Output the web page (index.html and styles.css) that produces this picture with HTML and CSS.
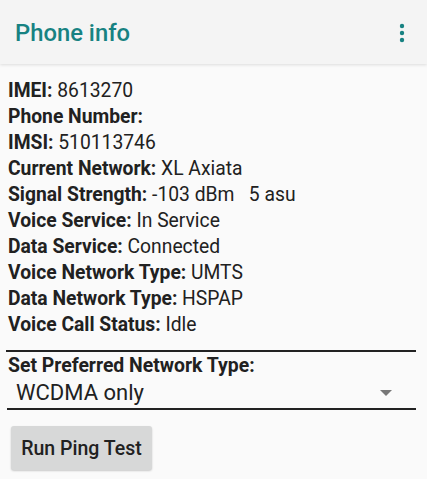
FILE: index.html
```html
<!DOCTYPE html>
<html lang="en">
<head>
  <meta charset="UTF-8">
  <meta name="viewport" content="width=device-width, initial-scale=1.0">
  <title>Phone info</title>
  <link rel="stylesheet" href="styles.css">
</head>
<body>
  <header class="appbar">
    <h1>Phone info</h1>
    <svg class="menu" width="6" height="20" viewBox="0 0 6 20">
      <circle cx="3" cy="3" r="2.2"></circle>
      <circle cx="3" cy="10" r="2.2"></circle>
      <circle cx="3" cy="17" r="2.2"></circle>
    </svg>
  </header>

  <main class="content">
    <ul class="info">
      <li><b>IMEI:</b> 8613270</li>
      <li><b>Phone Number:</b></li>
      <li><b>IMSI:</b> 510113746</li>
      <li><b>Current Network:</b> XL Axiata</li>
      <li><b>Signal Strength:</b> -103 dBm&nbsp;&nbsp;&nbsp;5 asu</li>
      <li><b>Voice Service:</b> In Service</li>
      <li><b>Data Service:</b> Connected</li>
      <li><b>Voice Network Type:</b> UMTS</li>
      <li><b>Data Network Type:</b> HSPAP</li>
      <li><b>Voice Call Status:</b> Idle</li>
    </ul>

    <div class="divider"></div>

    <label class="pref-label">Set Preferred Network Type:</label>
    <div class="spinner">
      <span>WCDMA only</span>
      <span class="arrow"></span>
    </div>

    <button class="ping">Run Ping Test</button>
  </main>
</body>
</html>
```

FILE: styles.css
```css
* {
  margin: 0;
  padding: 0;
  box-sizing: border-box;
}

body {
  font-family: Roboto, 'Noto Sans', sans-serif;
  background-color: #fafafa;
  color: #212121;
  width: 427px;
  height: 479px;
  overflow: hidden;
}

.appbar {
  height: 64px;
  background-color: #f4f4f4;
  display: flex;
  align-items: center;
  justify-content: space-between;
  padding: 0 22px 0 15px;
  box-shadow: 0 1px 3px rgba(0, 0, 0, 0.12);
  position: relative;
}

.appbar h1 {
  font-size: 23.8px;
  font-weight: 500;
  color: #178282;
  margin-top: 1px;
}

.menu {
  fill: #178282;
  margin-top: 1px;
}

.content {
  padding: 14px 11px 0 8px;
}

.info {
  list-style: none;
}

.info li {
  font-size: 19.3px;
  line-height: 26px;
  height: 26px;
  white-space: nowrap;
}

.info b {
  font-weight: 700;
}

.divider {
  height: 2px;
  background-color: #222;
  margin: 12px 0 0 -2px;
}

.pref-label {
  display: block;
  font-size: 19.4px;
  font-weight: 700;
  line-height: 22px;
  margin-top: 3px;
}

.spinner {
  display: flex;
  align-items: center;
  justify-content: space-between;
  height: 33px;
  margin-left: -1px;
  padding: 0 24px 0 9px;
  border-bottom: 2px solid #222;
  font-size: 22px;
}

.arrow {
  width: 0;
  height: 0;
  border-left: 6px solid transparent;
  border-right: 6px solid transparent;
  border-top: 6px solid #777;
}

.ping {
  display: block;
  margin: 16px 0 0 3px;
  width: 141px;
  height: 44px;
  background-color: #d7d8d8;
  border: none;
  border-radius: 3px;
  box-shadow: 0 1px 2px rgba(0, 0, 0, 0.2);
  font-family: Roboto, sans-serif;
  font-size: 19.5px;
  font-weight: 500;
  color: #212121;
}
```
